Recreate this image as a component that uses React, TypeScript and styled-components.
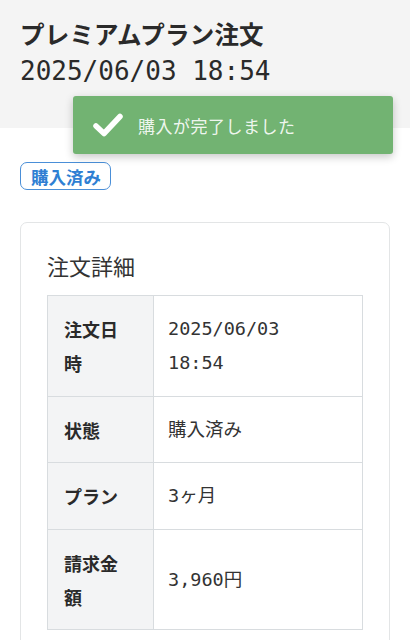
import React from "react";
import styled, { createGlobalStyle } from "styled-components";

const Global = createGlobalStyle`
  html, body { margin: 0; padding: 0; background: #ffffff; overflow: hidden; }
  body {
    font-family: "DejaVu Sans Mono", "Noto Sans CJK JP", monospace;
    color: #222;
  }
  * { box-sizing: border-box; }
`;

const Page = styled.div`
  position: relative;
  width: 410px;
  height: 640px;
  overflow: hidden;
`;

const Header = styled.header`
  background: #f4f4f4;
  height: 128px;
  padding: 15px 20px 0 20px;
`;

const Title = styled.h1`
  margin: 0;
  font-family: "Noto Sans CJK JP", sans-serif;
  font-weight: 700;
  font-size: 24.5px;
  line-height: 37px;
  color: #2a2a2a;
  letter-spacing: 0.2px;
`;

const DateLine = styled.div`
  font-family: "DejaVu Sans Mono", monospace;
  font-size: 26px;
  line-height: 38px;
  color: #2a2a2a;
`;

const Toast = styled.div`
  position: absolute;
  left: 73px;
  top: 96px;
  width: 320px;
  height: 58px;
  background: #72b372;
  border-radius: 3px;
  box-shadow: 0 3px 8px rgba(0, 0, 0, 0.22);
  display: flex;
  align-items: center;
  padding-left: 19px;
  gap: 14px;
`;

const ToastText = styled.span`
  font-family: "Noto Sans CJK JP", sans-serif;
  font-size: 17px;
  color: rgba(255, 255, 255, 0.9);
  letter-spacing: 0.5px;
`;

const Body = styled.main`
  padding: 34px 20px 0 20px;
`;

const Badge = styled.span`
  display: inline-flex;
  align-items: center;
  height: 28px;
  padding: 0 9px 0 10px;
  border: 1.5px solid #4a8fd8;
  border-radius: 7px;
  color: #2f7fd3;
  font-family: "Noto Sans CJK JP", sans-serif;
  font-weight: 700;
  font-size: 17.5px;
`;

const Card = styled.section`
  margin-top: 32px;
  border: 1.5px solid #e3e5e6;
  border-radius: 7px;
  padding: 24px 26px 40px 26px;
`;

const CardTitle = styled.h2`
  margin: 0 0 12px 0;
  font-family: "Noto Sans CJK JP", sans-serif;
  font-weight: 400;
  font-size: 22px;
  line-height: 36px;
  color: #333;
`;

const Table = styled.table`
  width: 100%;
  border-collapse: collapse;
  border: 1.5px solid #d8dcdf;
`;

const Row = styled.tr`
  border-bottom: 1.5px solid #d8dcdf;
`;

const Label = styled.th`
  width: 106px;
  background: #f3f4f5;
  border-right: 1.5px solid #d8dcdf;
  text-align: left;
  vertical-align: middle;
  padding: 16px 26px 15.5px 16px;
  font-family: "Noto Sans CJK JP", sans-serif;
  font-weight: 700;
  font-size: 18px;
  line-height: 34px;
  color: #2a2a2a;
`;

const Value = styled.td`
  vertical-align: middle;
  padding: 16px 14px 15.5px 14px;
  font-family: "DejaVu Sans Mono", "Noto Sans CJK JP", monospace;
  font-size: 18.5px;
  line-height: 34px;
  color: #333;
`;

const Check = () => (
  <svg width="32" height="26" viewBox="0 0 32 26">
    <path
      d="M4 14 L12 21.5 L28 4.5"
      fill="none"
      stroke="#ffffff"
      strokeWidth="5.5"
      strokeLinecap="round"
      strokeLinejoin="round"
    />
  </svg>
);

const rows: [string, React.ReactNode][] = [
  ["注文日時", <>2025/06/03<br />18:54</>],
  ["状態", "購入済み"],
  ["プラン", "3ヶ月"],
  ["請求金額", "3,960円"],
];

export default function App() {
  return (
    <Page>
      <Global />
      <Header>
        <Title>プレミアムプラン注文</Title>
        <DateLine>2025/06/03 18:54</DateLine>
      </Header>
      <Toast>
        <Check />
        <ToastText>購入が完了しました</ToastText>
      </Toast>
      <Body>
        <Badge>購入済み</Badge>
        <Card>
          <CardTitle>注文詳細</CardTitle>
          <Table>
            <tbody>
              {rows.map(([k, v]) => (
                <Row key={k}>
                  <Label>{k}</Label>
                  <Value>{v}</Value>
                </Row>
              ))}
            </tbody>
          </Table>
        </Card>
      </Body>
    </Page>
  );
}
